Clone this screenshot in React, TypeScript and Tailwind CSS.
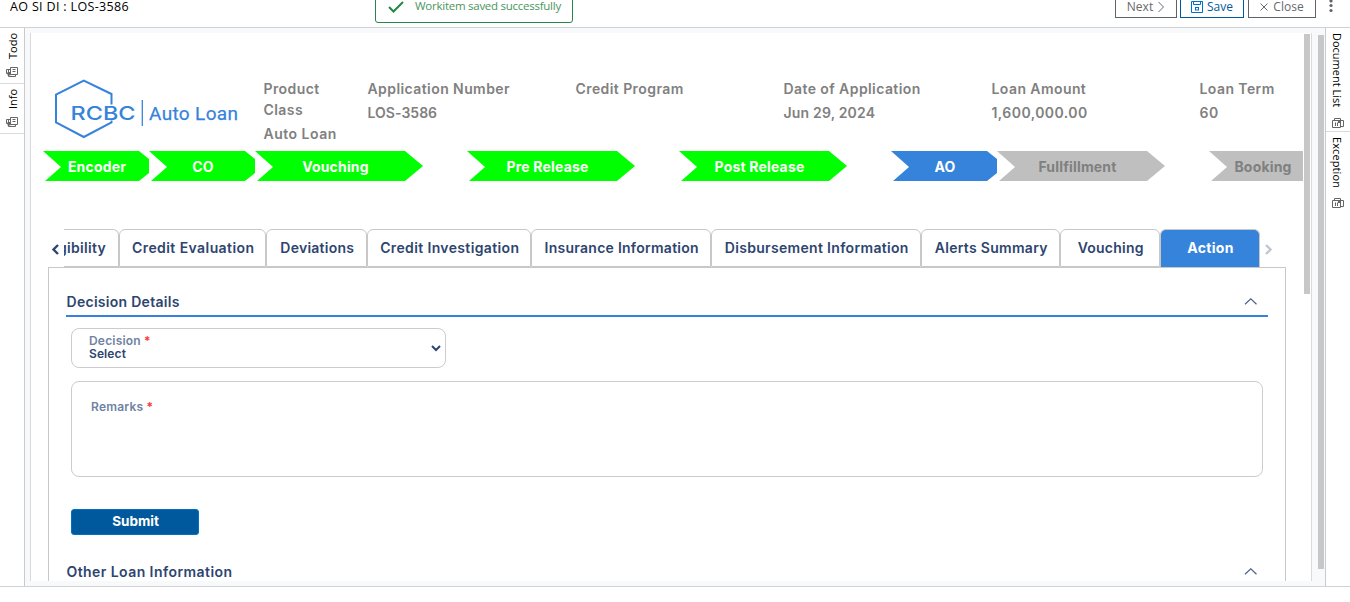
import React from "react";

const fields = [
  { label: "Product Class", value: "Auto Loan", ls: "tracking-[0.5px]", w: "w-[104px] pr-[30px]" },
  { label: "Application Number", value: "LOS-3586", ls: "tracking-[0.02px]", w: "w-[208px] pr-[30px]" },
  { label: "Credit Program", value: "", ls: "tracking-[0.1px]", w: "w-[208px] pr-[30px]" },
  { label: "Date of Application", value: "Jun 29, 2024", ls: "tracking-[0.18px]", w: "w-[208px] pr-[30px]" },
  { label: "Loan Amount", value: "1,600,000.00", ls: "tracking-[0.43px]", w: "w-[208px] pr-[30px]" },
  { label: "Loan Term", value: "60", ls: "tracking-[0.6px]", w: "w-[104px]" },
];

const stages = [
  { name: "Encoder", slot: "w-[106px]", clipped: true, fill: "#00ff00", text: "text-white" },
  { name: "CO", slot: "w-[106px]", clipped: true, fill: "#00ff00", text: "text-white" },
  { name: "Vouching", slot: "w-[212px]", clipped: false, fill: "#00ff00", text: "text-white" },
  { name: "Pre Release", slot: "w-[212px]", clipped: false, fill: "#00ff00", text: "text-white" },
  { name: "Post Release", slot: "w-[212px]", clipped: false, fill: "#00ff00", text: "text-white" },
  { name: "AO", slot: "w-[106px]", clipped: true, fill: "#3683dc", text: "text-white" },
  { name: "Fullfillment", slot: "w-[212px]", clipped: false, fill: "#bfbfbf", text: "text-[#808080]" },
  { name: "Booking", slot: "w-[106px]", clipped: true, fill: "#bfbfbf", text: "text-[#808080]", last: true },
];

const tabs = [
  { name: "Credit Evaluation", w: "w-[147px] tracking-[0.42px]" },
  { name: "Deviations", w: "w-[101px] tracking-[0.25px]" },
  { name: "Credit Investigation", w: "w-[164px] tracking-[0.36px]" },
  { name: "Insurance Information", w: "w-[180px] tracking-[0.26px]" },
  { name: "Disbursement Information", w: "w-[210px] tracking-[0.32px]" },
  { name: "Alerts Summary", w: "w-[139px] tracking-[0.3px]" },
  { name: "Vouching", w: "w-[100px] tracking-[0.25px]" },
];

function DockIcon({ className = "" }: { className?: string }) {
  return (
    <svg className={`shrink-0 ${className}`} width="12" height="10" viewBox="0 0 12 10" fill="none" stroke="#666">
      <path d="M4.500 .5h7v7h-7zM6.500 2.500h3M6.500 4.500h3M2.500 3v6.500h7V8M4 2.500H.5v4H2" />
      <path d="M1.500 5h3v3.500h-3z" fill="#666" stroke="none" />
    </svg>
  );
}

function DockIconRight({ className = "" }: { className?: string }) {
  return (
    <svg className={`shrink-0 ${className}`} width="12" height="10" viewBox="0 0 12 10" fill="none" stroke="#666">
      <path d="M.5 2.500h8v7h-8zM3.500 4.500v3.500M5.500 4.500v3.500M2.500 2V.5h6v2h3v6H9" />
      <path d="M6 2h3v3H6z" fill="#666" stroke="none" />
    </svg>
  );
}

function Chevron({ className = "" }: { className?: string }) {
  return (
    <svg className={className} width="14" height="9" viewBox="0 0 14 9" fill="none" stroke="#4a6189" strokeWidth="1.2">
      <path d="M2 7.300 7.800 1.800l5.700 5.500" />
    </svg>
  );
}

function SectionHead({ title, spacing }: { title: string; spacing: string }) {
  return (
    <div className="flex h-[31px] items-start justify-between border-b-2 border-[#3683dc]">
      <h2 className={`pl-[0.5px] text-[14px] leading-[32px] font-semibold whitespace-nowrap ${spacing}`}>{title}</h2>
      <Chevron className="mt-[11px] mr-[11px]" />
    </div>
  );
}

function Logo() {
  return (
    <svg width="190" height="62" viewBox="0 0 190 62" fill="none">
      <path d="M58.500 26.500V16L30.800 2.500 3 16.500v28l27.800 14.500 27.700-14.500v-2" stroke="#3683dc" strokeWidth="2" />
      <text x="17.500" y="42" fontFamily="Inter" fontSize="19.300" fontWeight="500" fill="#3683dc" textLength="65" lengthAdjust="spacingAndGlyphs">RCBC</text>
      <path d="M89.300 22v26" stroke="#3683dc" strokeWidth="1.300" />
      <text x="96" y="42" fontFamily="Roboto" fontSize="19" fontWeight="400" fill="#3683dc" stroke="#3683dc" strokeWidth="0.25" textLength="89">Auto Loan</text>
    </svg>
  );
}

export default function App() {
  return (
    <div className="flex h-[602px] w-[1350px] flex-col overflow-hidden bg-white font-['Inter','Liberation_Sans',sans-serif] text-[#2d456f]">
      <header className="relative flex h-[28px] shrink-0 items-start justify-between border-b border-[#d0d2d5] font-['Open_Sans',sans-serif]">
        <h1 className="pl-[10px] text-[12.5px] leading-[13px] tracking-[0.34px] text-black">AO SI DI : LOS-3586</h1>
        <div className="absolute top-[-10px] left-[375px] flex h-[33px] w-[198px] items-start rounded-[3px] border border-[#26864a] pt-[8px] pl-[12px] text-[11.500px] tracking-[-0.26px] text-[#4a9560]">
          <svg className="mt-[1px] shrink-0" width="18" height="13" viewBox="0 0 18 13" fill="none" stroke="#26864a" strokeWidth="2"><path d="M1 7l4.500 4.500L15 2" /></svg>
          <span className="ml-[9px] leading-[14px] whitespace-nowrap">Workitem saved successfully</span>
        </div>
        <div className="-mt-[4px] mr-[17px] flex text-[12px] leading-[20px] text-[#66696e]">
          <button className="mr-[3px] flex h-[22px] w-[62px] items-center justify-center gap-[4px] border border-[#606368]">
            Next
            <svg width="8" height="12" viewBox="0 0 8 12" fill="none" stroke="#66696e"><path d="m1.500 1 5 5-5 5" /></svg>
          </button>
          <button className="mr-[4px] flex h-[22px] w-[64px] items-center justify-center gap-[4px] border border-[#005b9c] text-[#005b9c]">
            <svg width="12" height="12" viewBox="0 0 12 12" fill="none" stroke="#0072c6"><path d="M.5.500h11v11H.5zM2.500.5v3h7v-3" /><rect x="4.500" y="6.500" width="3" height="2.500" /></svg>
            Save
          </button>
          <button className="flex h-[22px] w-[68px] items-center justify-center gap-[5px] border border-[#606368]">
            <svg width="8" height="8" viewBox="0 0 8 8" fill="none" stroke="#66696e"><path d="m.5.500 7 7m0-7-7 7" /></svg>
            Close
          </button>
          <svg className="ml-[13px]" width="4" height="17" viewBox="0 0 4 17" fill="#606368"><circle cx="2" cy="5" r="1.600" /><circle cx="2" cy="9.500" r="1.600" /><circle cx="2" cy="14.500" r="1.600" /></svg>
        </div>
      </header>

      <div className="flex h-[559px] shrink-0 border-b border-[#d0d2d5]">
        <aside className="flex w-[25px] shrink-0 flex-col border-r border-[#c8cacd] font-['Open_Sans',sans-serif] text-[11px] leading-[14px] text-black">
          <div className="flex h-[56px] flex-col items-center border-b border-[#d8dadd] pt-[5px]">
            <span className="ml-[2px] h-[26px] rotate-180 [writing-mode:vertical-rl]">Todo</span>
            <DockIcon className="mt-[8px]" />
          </div>
          <div className="flex h-[50px] flex-col items-center border-b border-[#d8dadd] pt-[4px]">
            <span className="ml-[2px] h-[21px] rotate-180 [writing-mode:vertical-rl]">Info</span>
            <DockIcon className="mt-[8px]" />
          </div>
        </aside>

        <main className="flex w-[1300px] shrink-0 bg-[#f8f9fb] pt-[5px] pb-[5px] pl-[5px]">
          <div className="flex w-[1282px] shrink-0 overflow-hidden border-x border-[#d8dadd] bg-white">
            <div className="w-[1272px] shrink-0 overflow-hidden">
              <div className="flex h-[118px] pt-[45px] pl-[22px] text-[14px] font-semibold text-[#808080]">
                <div className="w-[210px] shrink-0"><Logo /></div>
                {fields.map((f) => (
                  <div key={f.label} className={`${f.w} shrink-0 pl-[0.5px] leading-[21px]`}>
                    <p className="tracking-[0.42px]">{f.label}</p>
                    <p className={`mt-[3px] whitespace-nowrap ${f.ls}`}>{f.value}</p>
                  </div>
                ))}
              </div>

              <div className="flex h-[30px] pl-[12px]">
                {stages.map((s) => (
                  <div key={s.name} className={`grid h-[30px] shrink-0 overflow-hidden ${s.slot}`}>
                    <svg className="col-start-1 row-start-1" width="168" height="30" viewBox="0 0 168 30">
                      <path d={s.last ? "M0 0H106V30H2L18 16Z" : s.clipped ? "M0 0H96L106 8V22L96 30H2L18 16Z" : "M0 0H150L168 15L150 30H2L18 16Z"} fill={s.fill} />
                    </svg>
                    <span className={`relative col-start-1 row-start-1 text-center text-[14px] leading-[32px] font-bold tracking-[0.17px] whitespace-nowrap ${s.text} ${s.clipped ? "w-[108px]" : "w-[161px]"}`}>{s.name}</span>
                  </div>
                ))}
              </div>

              <div className="mt-[48px] flex h-[39px] pl-[17px] text-[14px] font-semibold">
                <svg className="mt-[15px] mr-[5px] ml-[2px]" width="9" height="11" viewBox="0 0 9 11" fill="none" stroke="#2d456f" strokeWidth="2.400"><path d="M8 1 3.500 5.500 8 10" /></svg>
                <div className="flex h-[38px] w-[55px] shrink-0 items-center justify-end overflow-hidden rounded-tr-[6px] border-t border-r border-b border-[#c8c8c8] pr-[12px] pb-[2px] tracking-[0.3px] whitespace-nowrap">
                  <span>Eligibility</span>
                </div>
                {tabs.map((t) => (
                  <div key={t.name} className={`flex h-[38px] shrink-0 items-center justify-center rounded-t-[6px] border border-[#c8c8c8] pb-[2px] pl-[1.5px] whitespace-nowrap ${t.w}`}>{t.name}</div>
                ))}
                <div className="flex h-[38px] w-[100px] shrink-0 items-center justify-center rounded-t-[6px] border-x border-t border-[#c8c8c8] bg-[#3683dc] pb-[2px] pl-[1px] font-bold tracking-[0.3px] text-white">Action</div>
                <svg className="mt-[15px] ml-[4px]" width="9" height="11" viewBox="0 0 9 11" fill="none" stroke="#c0c7d2" strokeWidth="2.400"><path d="M2 1l4.500 4.500L2 10" /></svg>
              </div>

              <section className="-mt-[1px] ml-[17px] h-[320px] w-[1238px] border border-[#c8c8c8] pt-[18px] pl-[17px]">
                <div className="w-[1202px]">
                  <SectionHead title="Decision Details" spacing="tracking-[0.28px]" />
                  <div className="pl-[5px]">
                    <div className="mt-[11px] flex h-[40px] w-[375px] items-center justify-between rounded-[8px] border border-[#ccc] pr-[4px] pl-[17px] text-[12px] leading-[13px] font-semibold">
                      <div className="pb-[2px]">
                        <p className="tracking-[0.2px] text-[#6f82a3]">Decision <span className="text-[#f33]">*</span></p>
                        <p className="tracking-[0.1px]">Select</p>
                      </div>
                      <svg width="10" height="7" viewBox="0 0 10 7" fill="none" stroke="#2d456f" strokeWidth="2"><path d="m1 1 4 4 4-4" /></svg>
                    </div>
                    <div className="mt-[13px] h-[96px] w-[1192px] rounded-[8px] border border-[#ccc] pt-[17px] pl-[19px] text-[12px] leading-[16px] font-semibold tracking-[0.2px] text-[#6f82a3]">
                      Remarks <span className="text-[#f33]">*</span>
                    </div>
                    <button className="mt-[32px] block h-[26px] w-[128px] rounded-[3px] border border-[#0072c6] bg-[#00599c] pb-[2px] pl-[1px] text-[13.5px] leading-[22px] font-bold text-white">Submit</button>
                  </div>
                  <div className="mt-[21px]"><SectionHead title="Other Loan Information" spacing="tracking-[0.43px]" /></div>
                </div>
              </section>
            </div>
            <div className="mt-[1px] ml-[1px] h-[260px] w-[6px] bg-[#c7c7c7]" />
          </div>
          <div className="mt-[2px] ml-[6px] h-[534px] w-[6px] bg-[#c7c7c7]" />
        </main>

        <aside className="flex w-[25px] shrink-0 flex-col border-l border-[#c8cacd] font-['Open_Sans',sans-serif] text-[11px] leading-[14px] text-black">
          <div className="flex h-[104px] flex-col items-center border-b border-[#d8dadd] pt-[5px]">
            <span className="mr-[3px] h-[77px] whitespace-nowrap [writing-mode:vertical-rl]">Document List</span>
            <DockIconRight className="mt-[8px]" />
          </div>
          <div className="flex flex-col items-center pt-[5px]">
            <span className="mr-[3px] h-[53px] tracking-[0.1px] whitespace-nowrap [writing-mode:vertical-rl]">Exception</span>
            <DockIconRight className="mt-[8px]" />
          </div>
        </aside>
      </div>
    </div>
  );
}
